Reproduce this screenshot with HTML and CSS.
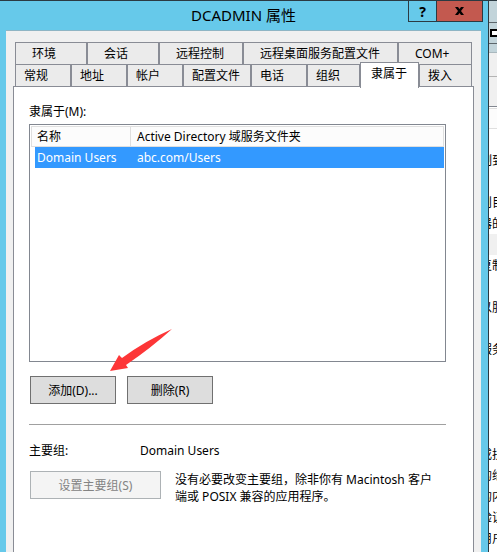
FILE: index.html
```html
<!DOCTYPE html>
<html lang="zh-CN">

<head>
  <meta charset="UTF-8">
  <meta name="viewport" content="width=device-width, initial-scale=1.0">
  <title>DCADMIN 属性</title>
  <link rel="stylesheet" href="styles.css">
</head>

<body>
  <main class="dialog">
    <header class="titlebar">
      <h1 class="title">DCADMIN 属性</h1>
      <div class="window-buttons">
        <button class="help" type="button">?</button>
        <button class="close" type="button" aria-label="关闭">
          <svg width="9" height="8" viewBox="0 0 9 8">
            <path d="M0 0h3l1.500 2L6 0h3L6 4l3 4H6L4.500 6 3 8H0l3-4z" />
          </svg>
        </button>
      </div>
    </header>

    <div class="content">
      <div class="tabs tabs-back">
        <button class="tab" type="button">环境</button>
        <button class="tab" type="button">会话</button>
        <button class="tab" type="button">远程控制</button>
        <button class="tab" type="button">远程桌面服务配置文件</button>
        <button class="tab" type="button">COM+</button>
      </div>
      <div class="tabs tabs-front">
        <button class="tab" type="button">常规</button>
        <button class="tab" type="button">地址</button>
        <button class="tab" type="button">帐户</button>
        <button class="tab" type="button">配置文件</button>
        <button class="tab" type="button">电话</button>
        <button class="tab" type="button">组织</button>
        <button class="tab active" type="button">隶属于</button>
        <button class="tab" type="button">拨入</button>
      </div>

      <section class="panel">
        <h2 class="label" id="member-label">隶属于(M):</h2>
        <div class="list">
          <table class="groups" aria-labelledby="member-label">
            <thead>
              <tr>
                <th class="col-name">名称</th>
                <th>Active Directory 域服务文件夹</th>
              </tr>
            </thead>
            <tbody>
              <tr class="selected">
                <td>Domain Users</td>
                <td>abc.com/Users</td>
              </tr>
            </tbody>
          </table>
        </div>

        <div class="actions">
          <button class="btn" type="button">添加(D)...</button>
          <button class="btn" type="button">删除(R)</button>
          <svg class="arrow" width="64" height="44" viewBox="0 0 64 44">
            <path d="M1 43L10 27L13 30Q36 13 63 1Q42 20 17 37L19 40z" />
          </svg>
        </div>

        <hr class="divider">

        <div class="primary">
          <span class="primary-label">主要组:</span>
          <span>Domain Users</span>
        </div>
        <div class="primary-set">
          <button class="btn btn-wide" type="button" disabled>设置主要组(S)</button>
          <p class="note">没有必要改变主要组，除非你有 Macintosh 客户端或 POSIX 兼容的应用程序。</p>
        </div>
      </section>
    </div>
  </main>

  <!-- Ventana de detrás, solo asoma el borde -->
  <aside class="behind">
    <div class="behind-title"></div>
    <div class="behind-menu"><span class="behind-box"></span></div>
    <div class="behind-bar"></div>
    <div class="behind-tools"></div>
    <div class="behind-tools behind-tools-low"></div>
    <div class="behind-head"></div>
    <div class="behind-list">
      <span class="behind-row">制到</span>
      <span class="behind-row"></span>
      <span class="behind-row">则目</span>
      <span class="behind-row">器的</span>
      <span class="behind-row shaded"></span>
      <span class="behind-row">复制</span>
      <span class="behind-row"></span>
      <span class="behind-row">以服</span>
      <span class="behind-row"></span>
      <span class="behind-row">服务</span>
      <span class="behind-row"></span>
      <span class="behind-row"></span>
      <span class="behind-row"></span>
      <span class="behind-row"></span>
      <span class="behind-row">或扶</span>
      <span class="behind-row">的缘</span>
      <span class="behind-row">的内</span>
      <span class="behind-row">验证</span>
      <span class="behind-row">用户</span>
    </div>
  </aside>
</body>

</html>
```
FILE: styles.css
```css
* {
  box-sizing: border-box;
}

body {
  display: flex;
  min-height: 100vh;
  margin: 0;
  background-color: #fff;
  color: #000;
  font-family: "Noto Sans", "Noto Sans CJK SC", sans-serif;
  font-size: 12px;
  line-height: 17px;
}

button {
  font: inherit;
  color: inherit;
}

.dialog {
  display: flex;
  flex: 1;
  flex-direction: column;
  padding: 0 7px 0 6px;
  border-top: 1px solid #2b3a42;
  border-right: 1px solid #2b3a42;
  background-color: #66c9ea;
}

/* Barra de título */
.titlebar {
  display: grid;
  grid-template-columns: 75px 1fr 75px;
  height: 29px;
}

.title {
  grid-column: 2;
  margin: 0;
  font-size: 15px;
  font-weight: normal;
  line-height: 29px;
  text-align: center;
}

.window-buttons {
  display: flex;
  justify-content: flex-end;
  height: 21px;
  margin-right: -2px;
}

.help,
.close {
  display: flex;
  align-items: center;
  justify-content: center;
  padding: 0;
  border: 1px solid #2b3a42;
  border-top: 0;
}

.help {
  width: 28px;
  border-right: 0;
  background-color: #66c9ea;
  font-size: 14px;
  font-weight: bold;
}

.close {
  width: 47px;
  background-color: #c3594f;
}

/* Pestañas */
.content {
  display: flex;
  flex: 1;
  flex-direction: column;
  padding: 11px 7px 0;
  border-top: 1px solid #8fb5c4;
  background-color: #f0f0f0;
}

.tabs {
  display: grid;
  height: 22px;
  margin: 0 2px;
}

.tabs-back {
  grid-template-columns: 72fr 72fr 84fr 155fr 74fr;
}

.tabs-front {
  grid-template-columns: 56fr 56fr 56fr 68fr 56fr 53fr 59fr 53fr;
}

.tab {
  padding: 0 0 0 8px;
  border: 1px solid #898c95;
  border-bottom: 0;
  background-color: #ebebeb;
  text-align: left;
  white-space: nowrap;
}

.tabs-back .tab {
  padding-left: 16px;
}

.tab.active {
  z-index: 1;
  margin: -2px 0;
  padding: 0 0 4px 10px;
  background-color: #fff;
}

.panel {
  flex: 1;
  padding: 16px 27px 0 15px;
  border: 1px solid #898c95;
  border-bottom: 0;
  background-color: #fff;
}

.label {
  margin: 0 0 4px;
  font-size: 12px;
  font-weight: normal;
}

/* Lista de grupos */
.list {
  height: 238px;
  padding: 1px;
  border: 1px solid #828790;
}

.groups {
  width: 100%;
  border-spacing: 0;
  table-layout: fixed;
}

.groups th,
.groups td {
  height: 21px;
  padding: 0 6px;
  font-weight: normal;
  text-align: left;
}

.groups th {
  border: 1px solid #dfdfdf;
  border-left: 0;
  background-color: #fcfcfc;
}

.groups .col-name {
  width: 100px;
  padding-left: 5px;
  border-left: 1px solid #dfdfdf;
}

.selected td {
  background-color: #3399ff;
  color: #fff;
}

.selected td:first-child {
  padding: 0 0 0 2px;
  border-left: 4px solid #fff;
}

/* Botones */
.actions {
  position: relative;
  display: flex;
  gap: 11px;
  margin: 14px 0 0 1px;
}

.btn {
  width: 86px;
  height: 28px;
  padding: 0;
  border: 1px solid #707070;
  background-color: #dddddd;
}

.btn:disabled {
  border-color: #adb2b5;
  background-color: #f4f4f4;
  color: #838383;
}

.btn-wide {
  flex: none;
  width: 131px;
}

.arrow {
  position: absolute;
  top: -48px;
  left: 79px;
  fill: #fd3637;
  pointer-events: none;
}

.divider {
  height: 1px;
  margin: 20px 0 17px;
  border: 0;
  background-color: #a0a0a0;
}

.primary {
  display: flex;
}

.primary-label {
  width: 111px;
}

.primary-set {
  display: flex;
  gap: 14px;
  margin: 12px 0 0 1px;
}

.note {
  margin: 0;
  padding-right: 10px;
}

/* Ventana de detrás */
.behind {
  width: 8px;
  overflow: hidden;
  border-top: 1px solid #2b3a42;
}

.behind-title {
  height: 22px;
  border-bottom: 1px solid #5c666b;
  background-color: #c2d4da;
}

.behind-menu {
  height: 21px;
  padding: 6px 0 0 1px;
  border-bottom: 1px solid #5c666b;
  background-color: #c2d4da;
}

.behind-box {
  display: block;
  width: 12px;
  height: 8px;
  border: 2px solid #000;
  background-color: #fff;
}

.behind-bar {
  height: 9px;
  border-bottom: 1px solid #a9b8be;
  background-color: #c2d4da;
}

.behind-tools {
  height: 24px;
  border-bottom: 1px solid #b4b4b4;
  background-color: #f0f0f0;
}

.behind-tools-low {
  height: 30px;
  border-color: #828790;
}

.behind-head {
  height: 21px;
  margin-top: 1px;
  border: 1px solid #dfdfdf;
  border-width: 1px 0;
  background-color: #fcfcfc;
}

.behind-list {
  padding-top: 21px;
}

.behind-row {
  display: block;
  height: 21px;
  margin-left: -9px;
  line-height: 21px;
  white-space: nowrap;
}

.shaded {
  background-color: #f0f0f0;
}
```
